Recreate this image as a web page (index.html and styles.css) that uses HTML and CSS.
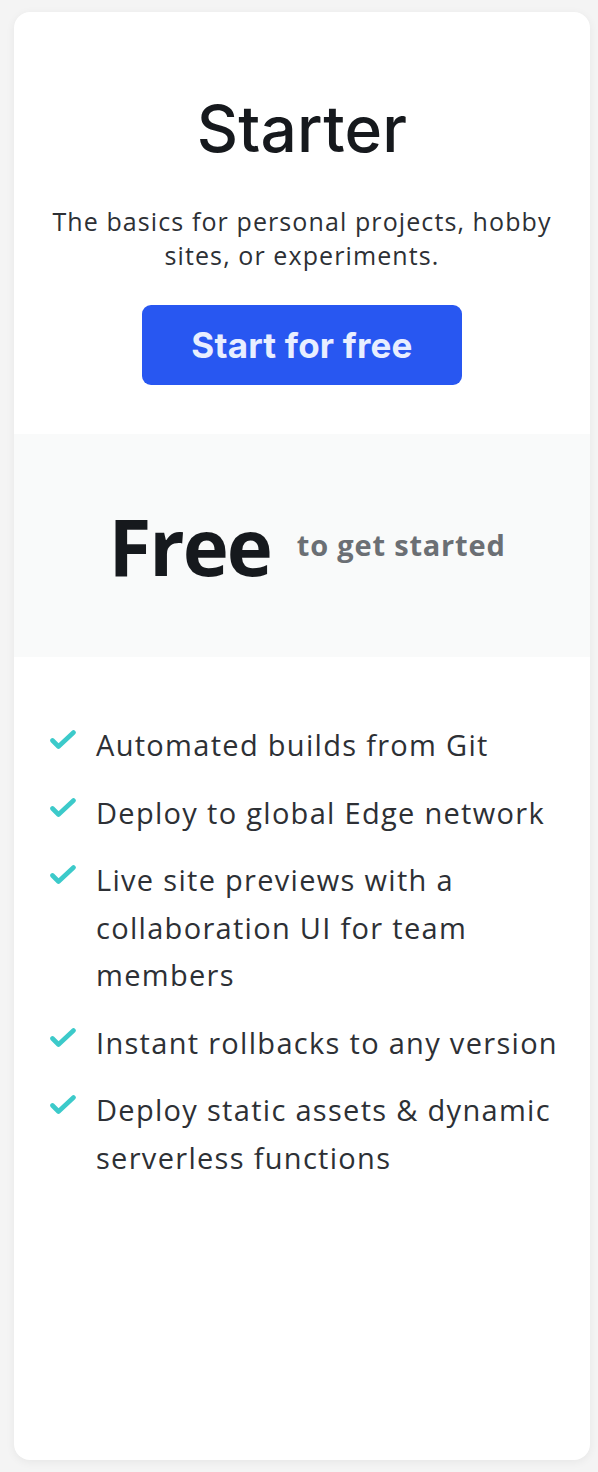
FILE: index.html
```html
<!DOCTYPE html>
<html>
<head>
<meta charset="utf-8">
<link rel="stylesheet" href="styles.css">
</head>
<body>
<div class="card">
  <div class="head">
    <h1 class="title">Starter</h1>
    <p class="desc">The basics for personal projects, hobby sites, or experiments.</p>
    <a class="btn">Start for free</a>
  </div>
  <div class="price">
    <span class="amount">Free</span>
    <span class="note">to get started</span>
  </div>
  <ul class="features">
    <li><svg class="check" viewBox="0 0 26 20"><path d="M2.5 10.5 L8.5 16.5 L23.5 2.5" fill="none" stroke="#3ccaca" stroke-width="4.6" stroke-linecap="round" stroke-linejoin="round"/></svg><span>Automated builds from Git</span></li>
    <li><svg class="check" viewBox="0 0 26 20"><path d="M2.5 10.5 L8.5 16.5 L23.5 2.5" fill="none" stroke="#3ccaca" stroke-width="4.6" stroke-linecap="round" stroke-linejoin="round"/></svg><span>Deploy to global Edge network</span></li>
    <li><svg class="check" viewBox="0 0 26 20"><path d="M2.5 10.5 L8.5 16.5 L23.5 2.5" fill="none" stroke="#3ccaca" stroke-width="4.6" stroke-linecap="round" stroke-linejoin="round"/></svg><span>Live site previews with a collaboration UI for team members</span></li>
    <li><svg class="check" viewBox="0 0 26 20"><path d="M2.5 10.5 L8.5 16.5 L23.5 2.5" fill="none" stroke="#3ccaca" stroke-width="4.6" stroke-linecap="round" stroke-linejoin="round"/></svg><span>Instant rollbacks to any version</span></li>
    <li><svg class="check" viewBox="0 0 26 20"><path d="M2.5 10.5 L8.5 16.5 L23.5 2.5" fill="none" stroke="#3ccaca" stroke-width="4.6" stroke-linecap="round" stroke-linejoin="round"/></svg><span>Deploy static assets &amp; dynamic serverless functions</span></li>
  </ul>
</div>
</body>
</html>
```
FILE: styles.css
```css
html, body {
  margin: 0;
  padding: 0;
}
body {
  background: #f4f4f4;
  padding: 12px 8px 12px 14px;
  font-family: "Open Sans", "Lato", sans-serif;
  color: #2d3035;
}
.card {
  width: 576px;
  height: 1448px;
  background: #ffffff;
  border-radius: 16px;
  box-shadow: 0 2px 10px rgba(0,0,0,0.06);
  overflow: hidden;
  box-sizing: border-box;
}
.head {
  height: 422px;
  box-sizing: border-box;
  padding-top: 85px;
  display: flex;
  flex-direction: column;
  align-items: center;
  text-align: center;
}
.title {
  margin: 0;
  font-family: "Inter", sans-serif;
  font-weight: 500;
  font-size: 64px;
  line-height: 1;
  letter-spacing: 0.2px;
  color: #16191d;
}
.desc {
  margin: 43px 0 0;
  padding: 0 30px;
  font-size: 25px;
  line-height: 34px;
  letter-spacing: 1.1px;
  color: #2d3035;
}
.btn {
  margin-top: 33px;
  width: 320px;
  height: 80px;
  box-sizing: border-box;
  border-radius: 9px;
  background: #2857f1;
  color: #e8eeff;
  font-family: "Inter", sans-serif;
  font-weight: 700;
  font-size: 35px;
  letter-spacing: 0.2px;
  display: flex;
  align-items: center;
  justify-content: center;
}
.price {
  height: 223px;
  background: #f9fafa;
  display: flex;
  align-items: center;
  justify-content: center;
  gap: 26px;
  padding-left: 10px;
}
.amount {
  font-family: "Open Sans", sans-serif;
  font-weight: 700;
  font-size: 78px;
  color: #16191d;
  letter-spacing: -2px;
}
.note {
  font-weight: 700;
  font-size: 29px;
  letter-spacing: 0.8px;
  color: #6b6f74;
  margin-top: -2px;
}
.features {
  list-style: none;
  margin: 0;
  padding: 64px 26px 0 36px;
  display: flex;
  flex-direction: column;
  gap: 20px;
}
.features li {
  display: flex;
  align-items: flex-start;
  gap: 20px;
  font-size: 29px;
  line-height: 47.5px;
  letter-spacing: 1.3px;
  color: #2d3035;
}
.check {
  width: 26px;
  height: 20px;
  flex: none;
  margin-top: 9px;
}
```
